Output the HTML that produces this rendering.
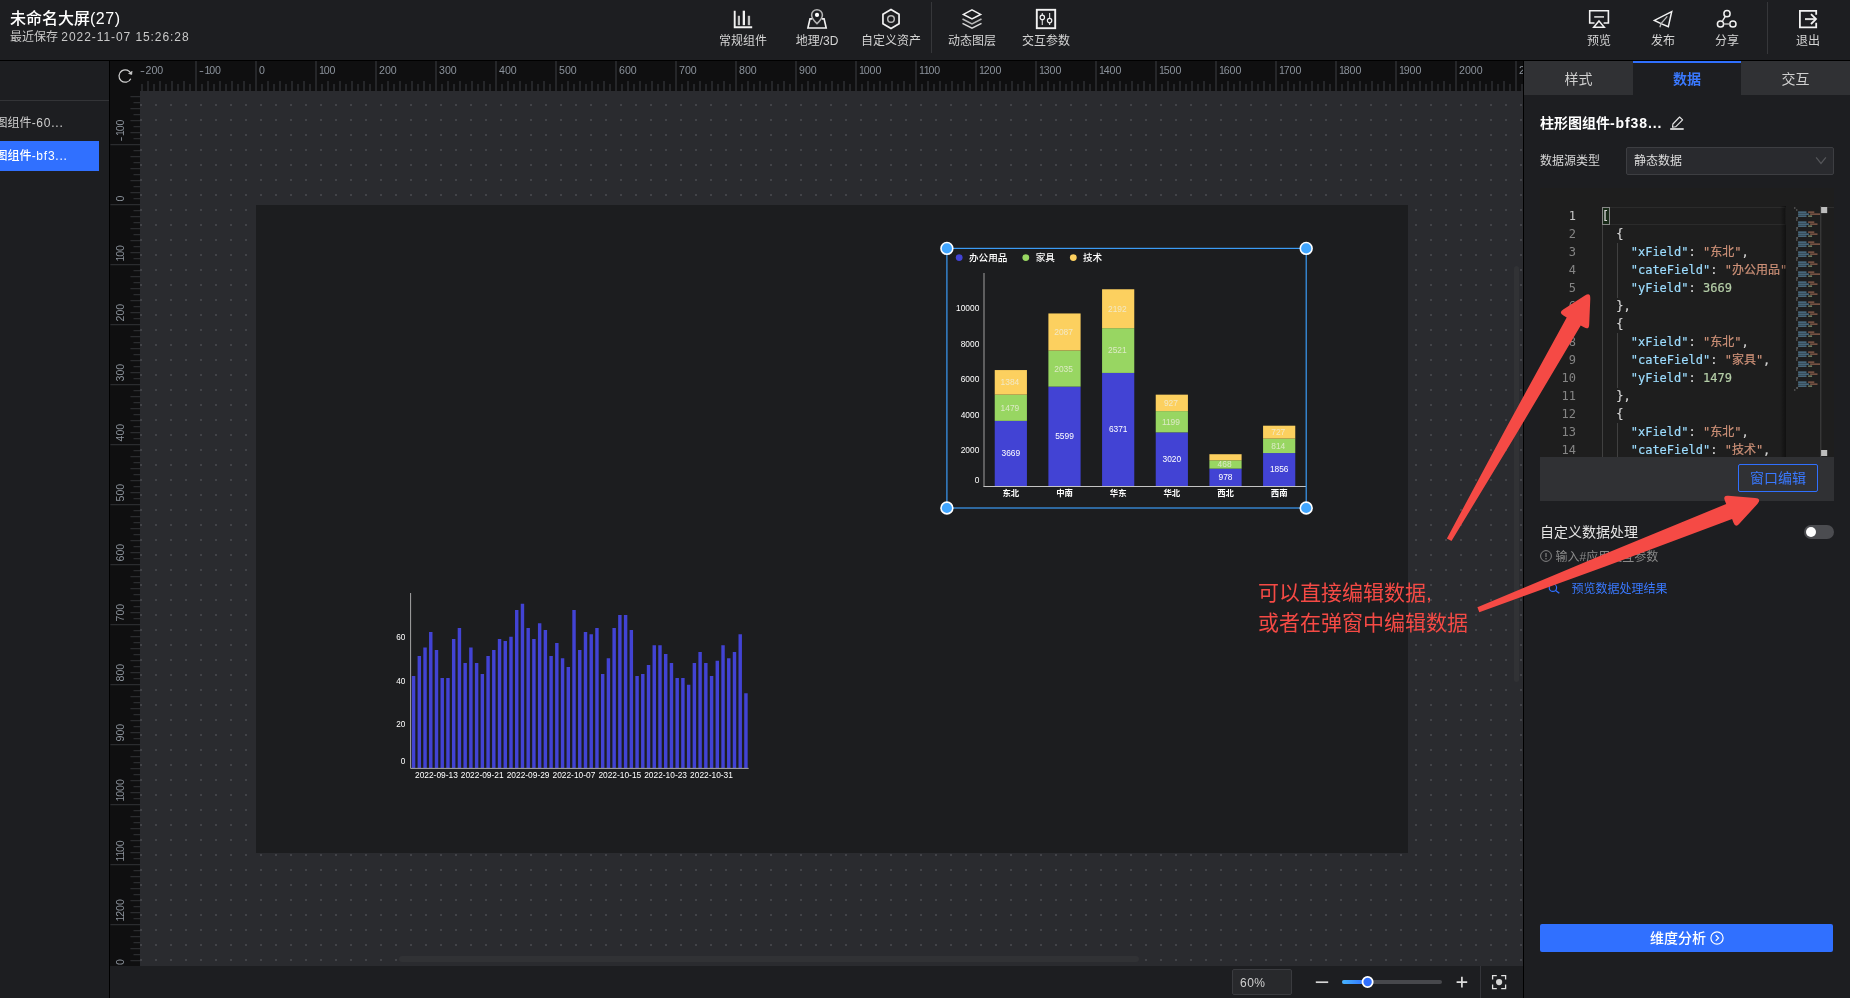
<!DOCTYPE html><html lang="zh-CN"><head><meta charset="utf-8"><title>未命名大屏(27)</title><style>

*{box-sizing:border-box}
html,body{margin:0;padding:0}
body{width:1850px;height:998px;overflow:hidden;background:#1d1e21;font-family:"Liberation Sans","Noto Sans CJK SC",sans-serif;color:#ddd;position:relative;font-size:12px}
.abs{position:absolute}
.hdr{left:0;top:0;width:1850px;height:61px;background:#1d1e21;border-bottom:1px solid #000}
.title{left:10px;top:8px;font-size:16px;line-height:21px;color:#fff;font-weight:500;white-space:nowrap}
.sub{left:10px;top:29px;font-size:12px;line-height:17px;color:#c9c9c9;white-space:nowrap}
.sub span{letter-spacing:.93px}
.nav{top:0;height:60px;text-align:center;color:#d4d4d4;font-size:12px;line-height:17px;white-space:nowrap}
.nav svg{position:absolute;left:50%;top:0;overflow:visible}
.nav .t{position:absolute;left:-20px;right:-20px;top:33px;text-align:center}
.vdiv{width:1px;background:#36373a}
.left{left:0;top:61px;width:110px;height:937px;background:#1d1e21;border-right:1px solid #000;overflow:hidden}
.li{position:absolute;left:0;width:99px;height:30px;line-height:30px;font-size:12px;color:#d0d0d0;white-space:nowrap;overflow:hidden}
.li span{position:absolute;left:-4.4px;top:0}
.li i{font-style:normal;letter-spacing:.75px}
.work{left:140px;top:91px;width:1383px;height:875px;background-color:#2a2b2f;
 background-image:radial-gradient(circle at 1px 1px,#424348 0,#424348 .95px,transparent 1.25px);background-size:15px 15px;background-position:0px -2px;overflow:hidden}
.canvas{left:256px;top:205px;width:1152px;height:648px;background:#1c1d1f}
.bbar{left:110px;top:966px;width:1413px;height:32px;background:#1d1e21}
.right{left:1523px;top:61px;width:327px;height:937px;background:#1d1e21;border-left:1px solid #000}
.tab{position:absolute;top:61px;height:34px;line-height:36px;text-align:center;font-size:14px;color:#cfcfcf;background:#303134}
.tab.on{background:#1d1e21;color:#3a79ff;font-weight:700;border-top:2px solid #3070ff;line-height:32px}

</style></head><body><div id="root" style="position:absolute;left:0;top:0;width:1850px;height:998px;will-change:transform">
<div class="abs hdr"></div>
<div class="abs title">未命名大屏<span style="letter-spacing:.5px">(27)</span></div>
<div class="abs sub">最近保存 <span>2022-11-07 15:26:28</span></div>
<div class="abs nav" style="left:706.0px;width:74px"><svg width="1" height="1"><g transform="translate(-743,0)">
<path d="M734.7 10.7V27.2H752.2" stroke="#f2f2f2" fill="none" stroke-width="1.9"/>
<rect x="737.8" y="15.8" width="2.2" height="9.4" fill="#c4c4c4"/><rect x="742.7" y="10.7" width="2.3" height="14.5" fill="#f2f2f2"/><rect x="747.8" y="15.8" width="2.3" height="9.4" fill="#c4c4c4"/></g></svg><div class="t">常规组件</div></div>
<div class="abs nav" style="left:780.0px;width:74px"><svg width="1" height="1"><g transform="translate(-817,0)">
<path d="M812.3 18.9H810L807.9 28H826.2L824.1 18.9H821.8" stroke="#f2f2f2" fill="none" stroke-width="1.6" stroke-linejoin="miter"/>
<path d="M817 23.6C813.6 20.6 811.6 17.9 811.6 15.1a5.4 5.4 0 0 1 10.8 0C822.4 17.9 820.4 20.6 817 23.6Z" stroke="#b4b4b4" fill="none" stroke-width="1.55"/>
<circle cx="817" cy="14.9" r="2.1" fill="#fff"/></g></svg><div class="t">地理/3D</div></div>
<div class="abs nav" style="left:854.0px;width:74px"><svg width="1" height="1"><g transform="translate(-891,0)">
<polygon points="891.00,9.40 899.05,14.20 899.05,23.80 891.00,28.60 882.95,23.80 882.95,14.20" stroke="#f2f2f2" fill="none" stroke-width="1.7"/><circle cx="891" cy="19" r="3.3" stroke="#b9b9b9" fill="none" stroke-width="1.5"/></g></svg><div class="t">自定义资产</div></div>
<div class="abs vdiv" style="left:931px;top:2px;height:51px"></div>
<div class="abs nav" style="left:935.0px;width:74px"><svg width="1" height="1"><g transform="translate(-972,0)">
<path d="M972 9.9L980.6 14.4L972 18.9L963.4 14.4Z" stroke="#f2f2f2" fill="none" stroke-width="1.5" stroke-linejoin="miter"/>
<path d="M962.5 19L972 23.8L981.5 19" stroke="#b9b9b9" fill="none" stroke-width="1.5"/>
<path d="M962.5 23.4L972 28.2L981.5 23.4" stroke="#d8d8d8" fill="none" stroke-width="1.5"/></g></svg><div class="t">动态图层</div></div>
<div class="abs nav" style="left:1009.0px;width:74px"><svg width="1" height="1"><g transform="translate(-1046,0)">
<rect x="1036.8" y="9.8" width="18.4" height="18.4" stroke="#f2f2f2" fill="none" stroke-width="1.9"/>
<path d="M1042.3 13.1V24.9M1049.6 13.1V24.9" stroke="#d0d0d0" stroke-width="1.2"/>
<circle cx="1042.3" cy="17.4" r="2.2" fill="#1d1e21" stroke="#f2f2f2" stroke-width="1.2"/><circle cx="1049.6" cy="20.6" r="2.2" fill="#1d1e21" stroke="#f2f2f2" stroke-width="1.2"/></g></svg><div class="t">交互参数</div></div>
<div class="abs nav" style="left:1567.0px;width:64px"><svg width="1" height="1"><g transform="translate(-1599,0)">
<path d="M1594.5 23H1589.7V10.8H1608.4V23H1603.6" stroke="#f2f2f2" fill="none" stroke-width="1.6"/>
<path d="M1599 21L1604.3 27.3H1593.7Z" stroke="#f2f2f2" fill="none" stroke-width="1.5" stroke-linejoin="miter"/>
<path d="M1594.2 16.9H1604" stroke="#c6c6c6" stroke-width="1.8"/></g></svg><div class="t">预览</div></div>
<div class="abs nav" style="left:1631.0px;width:64px"><svg width="1" height="1"><g transform="translate(-1663,0)">
<path d="M1671.7 11.7L1654.4 20.4L1661 23.6L1668.3 26.8L1671.7 11.7Z" stroke="#f2f2f2" fill="none" stroke-width="1.5" stroke-linejoin="miter"/>
<path d="M1667.3 16.4L1661 23.6L1659.9 27.2" stroke="#b9b9b9" fill="none" stroke-width="1.3"/></g></svg><div class="t">发布</div></div>
<div class="abs nav" style="left:1695.0px;width:64px"><svg width="1" height="1"><g transform="translate(-1727,0)">
<circle cx="1727" cy="13.7" r="3.1" stroke="#f2f2f2" fill="none" stroke-width="1.5"/><circle cx="1720.5" cy="24" r="3.1" stroke="#f2f2f2" fill="none" stroke-width="1.5"/><circle cx="1732.9" cy="24" r="3.1" stroke="#f2f2f2" fill="none" stroke-width="1.5"/>
<path d="M1725.2 16.7L1722.5 20.9" stroke="#f2f2f2" fill="none" stroke-width="1.4"/><path d="M1723.8 24H1729.6" stroke="#b9b9b9" fill="none" stroke-width="1.6"/></g></svg><div class="t">分享</div></div>
<div class="abs vdiv" style="left:1767px;top:2px;height:52px"></div>
<div class="abs nav" style="left:1776.0px;width:64px"><svg width="1" height="1"><g transform="translate(-1808,0)">
<path d="M1816.2 14.8V10.9H1799.9V27.3H1816.2V22.8" stroke="#f2f2f2" fill="none" stroke-width="1.8" stroke-linejoin="miter"/>
<path d="M1805 19.1H1815.5" stroke="#dcdcdc" stroke-width="2"/><path d="M1811 14.2L1816 19.1L1811 24" stroke="#f2f2f2" fill="none" stroke-width="1.8"/></g></svg><div class="t">退出</div></div>
<div class="abs left"><div class="abs" style="left:0;top:39px;width:109px;height:1px;background:#333437"></div>
<div class="li" style="top:47px"><span>图组件<i>-60...</i></span></div>
<div class="li" style="top:80px;background:#3070ff;color:#fff;font-weight:500"><span>图组件<i>-bf3...</i></span></div>
</div>
<div class="abs work"></div>
<div class="abs canvas"></div>
<div class="abs" style="left:1513.5px;top:266px;width:5.5px;height:416px;border-radius:3px;background:#313235"></div>
<div class="abs" style="left:399px;top:956px;width:740px;height:6px;border-radius:3px;background:#313235"></div>
<svg class="abs" style="left:110px;top:61px" width="1413" height="905" font-family='"Liberation Sans","Noto Sans CJK SC",sans-serif' font-size="10.6" fill="#8b929b"><rect x="0" y="0" width="1413" height="30" fill="#0f0f10"/><rect x="0" y="0" width="30" height="905" fill="#0f0f10"/><path d="M31 23h2v7h-2zM37 20h2v10h-2zM43 23h2v7h-2zM49 20h2v10h-2zM55 23h2v7h-2zM61 20h2v10h-2zM67 23h2v7h-2zM73 20h2v10h-2zM79 23h2v7h-2zM85 0h2v30h-2zM91 23h2v7h-2zM97 20h2v10h-2zM103 23h2v7h-2zM109 20h2v10h-2zM115 23h2v7h-2zM121 20h2v10h-2zM127 23h2v7h-2zM133 20h2v10h-2zM139 23h2v7h-2zM145 0h2v30h-2zM151 23h2v7h-2zM157 20h2v10h-2zM163 23h2v7h-2zM169 20h2v10h-2zM175 23h2v7h-2zM181 20h2v10h-2zM187 23h2v7h-2zM193 20h2v10h-2zM199 23h2v7h-2zM205 0h2v30h-2zM211 23h2v7h-2zM217 20h2v10h-2zM223 23h2v7h-2zM229 20h2v10h-2zM235 23h2v7h-2zM241 20h2v10h-2zM247 23h2v7h-2zM253 20h2v10h-2zM259 23h2v7h-2zM265 0h2v30h-2zM271 23h2v7h-2zM277 20h2v10h-2zM283 23h2v7h-2zM289 20h2v10h-2zM295 23h2v7h-2zM301 20h2v10h-2zM307 23h2v7h-2zM313 20h2v10h-2zM319 23h2v7h-2zM325 0h2v30h-2zM331 23h2v7h-2zM337 20h2v10h-2zM343 23h2v7h-2zM349 20h2v10h-2zM355 23h2v7h-2zM361 20h2v10h-2zM367 23h2v7h-2zM373 20h2v10h-2zM379 23h2v7h-2zM385 0h2v30h-2zM391 23h2v7h-2zM397 20h2v10h-2zM403 23h2v7h-2zM409 20h2v10h-2zM415 23h2v7h-2zM421 20h2v10h-2zM427 23h2v7h-2zM433 20h2v10h-2zM439 23h2v7h-2zM445 0h2v30h-2zM451 23h2v7h-2zM457 20h2v10h-2zM463 23h2v7h-2zM469 20h2v10h-2zM475 23h2v7h-2zM481 20h2v10h-2zM487 23h2v7h-2zM493 20h2v10h-2zM499 23h2v7h-2zM505 0h2v30h-2zM511 23h2v7h-2zM517 20h2v10h-2zM523 23h2v7h-2zM529 20h2v10h-2zM535 23h2v7h-2zM541 20h2v10h-2zM547 23h2v7h-2zM553 20h2v10h-2zM559 23h2v7h-2zM565 0h2v30h-2zM571 23h2v7h-2zM577 20h2v10h-2zM583 23h2v7h-2zM589 20h2v10h-2zM595 23h2v7h-2zM601 20h2v10h-2zM607 23h2v7h-2zM613 20h2v10h-2zM619 23h2v7h-2zM625 0h2v30h-2zM631 23h2v7h-2zM637 20h2v10h-2zM643 23h2v7h-2zM649 20h2v10h-2zM655 23h2v7h-2zM661 20h2v10h-2zM667 23h2v7h-2zM673 20h2v10h-2zM679 23h2v7h-2zM685 0h2v30h-2zM691 23h2v7h-2zM697 20h2v10h-2zM703 23h2v7h-2zM709 20h2v10h-2zM715 23h2v7h-2zM721 20h2v10h-2zM727 23h2v7h-2zM733 20h2v10h-2zM739 23h2v7h-2zM745 0h2v30h-2zM751 23h2v7h-2zM757 20h2v10h-2zM763 23h2v7h-2zM769 20h2v10h-2zM775 23h2v7h-2zM781 20h2v10h-2zM787 23h2v7h-2zM793 20h2v10h-2zM799 23h2v7h-2zM805 0h2v30h-2zM811 23h2v7h-2zM817 20h2v10h-2zM823 23h2v7h-2zM829 20h2v10h-2zM835 23h2v7h-2zM841 20h2v10h-2zM847 23h2v7h-2zM853 20h2v10h-2zM859 23h2v7h-2zM865 0h2v30h-2zM871 23h2v7h-2zM877 20h2v10h-2zM883 23h2v7h-2zM889 20h2v10h-2zM895 23h2v7h-2zM901 20h2v10h-2zM907 23h2v7h-2zM913 20h2v10h-2zM919 23h2v7h-2zM925 0h2v30h-2zM931 23h2v7h-2zM937 20h2v10h-2zM943 23h2v7h-2zM949 20h2v10h-2zM955 23h2v7h-2zM961 20h2v10h-2zM967 23h2v7h-2zM973 20h2v10h-2zM979 23h2v7h-2zM985 0h2v30h-2zM991 23h2v7h-2zM997 20h2v10h-2zM1003 23h2v7h-2zM1009 20h2v10h-2zM1015 23h2v7h-2zM1021 20h2v10h-2zM1027 23h2v7h-2zM1033 20h2v10h-2zM1039 23h2v7h-2zM1045 0h2v30h-2zM1051 23h2v7h-2zM1057 20h2v10h-2zM1063 23h2v7h-2zM1069 20h2v10h-2zM1075 23h2v7h-2zM1081 20h2v10h-2zM1087 23h2v7h-2zM1093 20h2v10h-2zM1099 23h2v7h-2zM1105 0h2v30h-2zM1111 23h2v7h-2zM1117 20h2v10h-2zM1123 23h2v7h-2zM1129 20h2v10h-2zM1135 23h2v7h-2zM1141 20h2v10h-2zM1147 23h2v7h-2zM1153 20h2v10h-2zM1159 23h2v7h-2zM1165 0h2v30h-2zM1171 23h2v7h-2zM1177 20h2v10h-2zM1183 23h2v7h-2zM1189 20h2v10h-2zM1195 23h2v7h-2zM1201 20h2v10h-2zM1207 23h2v7h-2zM1213 20h2v10h-2zM1219 23h2v7h-2zM1225 0h2v30h-2zM1231 23h2v7h-2zM1237 20h2v10h-2zM1243 23h2v7h-2zM1249 20h2v10h-2zM1255 23h2v7h-2zM1261 20h2v10h-2zM1267 23h2v7h-2zM1273 20h2v10h-2zM1279 23h2v7h-2zM1285 0h2v30h-2zM1291 23h2v7h-2zM1297 20h2v10h-2zM1303 23h2v7h-2zM1309 20h2v10h-2zM1315 23h2v7h-2zM1321 20h2v10h-2zM1327 23h2v7h-2zM1333 20h2v10h-2zM1339 23h2v7h-2zM1345 0h2v30h-2zM1351 23h2v7h-2zM1357 20h2v10h-2zM1363 23h2v7h-2zM1369 20h2v10h-2zM1375 23h2v7h-2zM1381 20h2v10h-2zM1387 23h2v7h-2zM1393 20h2v10h-2zM1399 23h2v7h-2zM1405 0h2v30h-2zM1411 23h2v7h-2z" fill="#252629"/><path d="M20.4 35h9.6v1.2h-9.6zM23.5 41h6.5v1.2h-6.5zM20.4 47h9.6v1.2h-9.6zM23.5 53h6.5v1.2h-6.5zM20.4 59h9.6v1.2h-9.6zM23.5 65h6.5v1.2h-6.5zM20.4 71h9.6v1.2h-9.6zM23.5 77h6.5v1.2h-6.5zM0.4 83h29.6v1.2h-29.6zM23.5 89h6.5v1.2h-6.5zM20.4 95h9.6v1.2h-9.6zM23.5 101h6.5v1.2h-6.5zM20.4 107h9.6v1.2h-9.6zM23.5 113h6.5v1.2h-6.5zM20.4 119h9.6v1.2h-9.6zM23.5 125h6.5v1.2h-6.5zM20.4 131h9.6v1.2h-9.6zM23.5 137h6.5v1.2h-6.5zM0.4 143h29.6v1.2h-29.6zM23.5 149h6.5v1.2h-6.5zM20.4 155h9.6v1.2h-9.6zM23.5 161h6.5v1.2h-6.5zM20.4 167h9.6v1.2h-9.6zM23.5 173h6.5v1.2h-6.5zM20.4 179h9.6v1.2h-9.6zM23.5 185h6.5v1.2h-6.5zM20.4 191h9.6v1.2h-9.6zM23.5 197h6.5v1.2h-6.5zM0.4 203h29.6v1.2h-29.6zM23.5 209h6.5v1.2h-6.5zM20.4 215h9.6v1.2h-9.6zM23.5 221h6.5v1.2h-6.5zM20.4 227h9.6v1.2h-9.6zM23.5 233h6.5v1.2h-6.5zM20.4 239h9.6v1.2h-9.6zM23.5 245h6.5v1.2h-6.5zM20.4 251h9.6v1.2h-9.6zM23.5 257h6.5v1.2h-6.5zM0.4 263h29.6v1.2h-29.6zM23.5 269h6.5v1.2h-6.5zM20.4 275h9.6v1.2h-9.6zM23.5 281h6.5v1.2h-6.5zM20.4 287h9.6v1.2h-9.6zM23.5 293h6.5v1.2h-6.5zM20.4 299h9.6v1.2h-9.6zM23.5 305h6.5v1.2h-6.5zM20.4 311h9.6v1.2h-9.6zM23.5 317h6.5v1.2h-6.5zM0.4 323h29.6v1.2h-29.6zM23.5 329h6.5v1.2h-6.5zM20.4 335h9.6v1.2h-9.6zM23.5 341h6.5v1.2h-6.5zM20.4 347h9.6v1.2h-9.6zM23.5 353h6.5v1.2h-6.5zM20.4 359h9.6v1.2h-9.6zM23.5 365h6.5v1.2h-6.5zM20.4 371h9.6v1.2h-9.6zM23.5 377h6.5v1.2h-6.5zM0.4 383h29.6v1.2h-29.6zM23.5 389h6.5v1.2h-6.5zM20.4 395h9.6v1.2h-9.6zM23.5 401h6.5v1.2h-6.5zM20.4 407h9.6v1.2h-9.6zM23.5 413h6.5v1.2h-6.5zM20.4 419h9.6v1.2h-9.6zM23.5 425h6.5v1.2h-6.5zM20.4 431h9.6v1.2h-9.6zM23.5 437h6.5v1.2h-6.5zM0.4 443h29.6v1.2h-29.6zM23.5 449h6.5v1.2h-6.5zM20.4 455h9.6v1.2h-9.6zM23.5 461h6.5v1.2h-6.5zM20.4 467h9.6v1.2h-9.6zM23.5 473h6.5v1.2h-6.5zM20.4 479h9.6v1.2h-9.6zM23.5 485h6.5v1.2h-6.5zM20.4 491h9.6v1.2h-9.6zM23.5 497h6.5v1.2h-6.5zM0.4 503h29.6v1.2h-29.6zM23.5 509h6.5v1.2h-6.5zM20.4 515h9.6v1.2h-9.6zM23.5 521h6.5v1.2h-6.5zM20.4 527h9.6v1.2h-9.6zM23.5 533h6.5v1.2h-6.5zM20.4 539h9.6v1.2h-9.6zM23.5 545h6.5v1.2h-6.5zM20.4 551h9.6v1.2h-9.6zM23.5 557h6.5v1.2h-6.5zM0.4 563h29.6v1.2h-29.6zM23.5 569h6.5v1.2h-6.5zM20.4 575h9.6v1.2h-9.6zM23.5 581h6.5v1.2h-6.5zM20.4 587h9.6v1.2h-9.6zM23.5 593h6.5v1.2h-6.5zM20.4 599h9.6v1.2h-9.6zM23.5 605h6.5v1.2h-6.5zM20.4 611h9.6v1.2h-9.6zM23.5 617h6.5v1.2h-6.5zM0.4 623h29.6v1.2h-29.6zM23.5 629h6.5v1.2h-6.5zM20.4 635h9.6v1.2h-9.6zM23.5 641h6.5v1.2h-6.5zM20.4 647h9.6v1.2h-9.6zM23.5 653h6.5v1.2h-6.5zM20.4 659h9.6v1.2h-9.6zM23.5 665h6.5v1.2h-6.5zM20.4 671h9.6v1.2h-9.6zM23.5 677h6.5v1.2h-6.5zM0.4 683h29.6v1.2h-29.6zM23.5 689h6.5v1.2h-6.5zM20.4 695h9.6v1.2h-9.6zM23.5 701h6.5v1.2h-6.5zM20.4 707h9.6v1.2h-9.6zM23.5 713h6.5v1.2h-6.5zM20.4 719h9.6v1.2h-9.6zM23.5 725h6.5v1.2h-6.5zM20.4 731h9.6v1.2h-9.6zM23.5 737h6.5v1.2h-6.5zM0.4 743h29.6v1.2h-29.6zM23.5 749h6.5v1.2h-6.5zM20.4 755h9.6v1.2h-9.6zM23.5 761h6.5v1.2h-6.5zM20.4 767h9.6v1.2h-9.6zM23.5 773h6.5v1.2h-6.5zM20.4 779h9.6v1.2h-9.6zM23.5 785h6.5v1.2h-6.5zM20.4 791h9.6v1.2h-9.6zM23.5 797h6.5v1.2h-6.5zM0.4 803h29.6v1.2h-29.6zM23.5 809h6.5v1.2h-6.5zM20.4 815h9.6v1.2h-9.6zM23.5 821h6.5v1.2h-6.5zM20.4 827h9.6v1.2h-9.6zM23.5 833h6.5v1.2h-6.5zM20.4 839h9.6v1.2h-9.6zM23.5 845h6.5v1.2h-6.5zM20.4 851h9.6v1.2h-9.6zM23.5 857h6.5v1.2h-6.5zM0.4 863h29.6v1.2h-29.6zM23.5 869h6.5v1.2h-6.5zM20.4 875h9.6v1.2h-9.6zM23.5 881h6.5v1.2h-6.5zM20.4 887h9.6v1.2h-9.6zM23.5 893h6.5v1.2h-6.5zM20.4 899h9.6v1.2h-9.6zM23.5 905h6.5v1.2h-6.5zM20.4 911h9.6v1.2h-9.6zM23.5 917h6.5v1.2h-6.5z" fill="#2b2c2f"/><text y="13.4"><tspan x="30.0" textLength="4.9" lengthAdjust="spacingAndGlyphs">-</tspan><tspan x="35.5 41.4 47.3">200</tspan></text><text y="13.4"><tspan x="89.0" textLength="4.9" lengthAdjust="spacingAndGlyphs">-</tspan><tspan x="94.5 99.2 105.1">100</tspan></text><text y="13.4"><tspan x="149.0">0</tspan></text><text y="13.4"><tspan x="209.0 213.7 219.6">100</tspan></text><text y="13.4"><tspan x="269.0 274.9 280.8">200</tspan></text><text y="13.4"><tspan x="329.0 334.9 340.8">300</tspan></text><text y="13.4"><tspan x="389.0 394.9 400.8">400</tspan></text><text y="13.4"><tspan x="449.0 454.9 460.8">500</tspan></text><text y="13.4"><tspan x="509.0 514.9 520.8">600</tspan></text><text y="13.4"><tspan x="569.0 574.9 580.8">700</tspan></text><text y="13.4"><tspan x="629.0 634.9 640.8">800</tspan></text><text y="13.4"><tspan x="689.0 694.9 700.8">900</tspan></text><text y="13.4"><tspan x="749.0 753.7 759.6 765.5">1000</tspan></text><text y="13.4"><tspan x="809.0 813.7 818.4 824.3">1100</tspan></text><text y="13.4"><tspan x="869.0 873.7 879.6 885.5">1200</tspan></text><text y="13.4"><tspan x="929.0 933.7 939.6 945.5">1300</tspan></text><text y="13.4"><tspan x="989.0 993.7 999.6 1005.5">1400</tspan></text><text y="13.4"><tspan x="1049.0 1053.7 1059.6 1065.5">1500</tspan></text><text y="13.4"><tspan x="1109.0 1113.7 1119.6 1125.5">1600</tspan></text><text y="13.4"><tspan x="1169.0 1173.7 1179.6 1185.5">1700</tspan></text><text y="13.4"><tspan x="1229.0 1233.7 1239.6 1245.5">1800</tspan></text><text y="13.4"><tspan x="1289.0 1293.7 1299.6 1305.5">1900</tspan></text><text y="13.4"><tspan x="1349.0 1354.9 1360.8 1366.7">2000</tspan></text><text y="13.4"><tspan x="1409.0 1414.9 1419.6 1425.5">2100</tspan></text><text transform="translate(14.2,80.5) rotate(-90)"><tspan x="0.0" textLength="4.9" lengthAdjust="spacingAndGlyphs">-</tspan><tspan x="5.5 10.2 16.1">100</tspan></text><text transform="translate(14.2,140.5) rotate(-90)"><tspan x="0.0">0</tspan></text><text transform="translate(14.2,200.5) rotate(-90)"><tspan x="0.0 4.7 10.6">100</tspan></text><text transform="translate(14.2,260.5) rotate(-90)"><tspan x="0.0 5.9 11.8">200</tspan></text><text transform="translate(14.2,320.5) rotate(-90)"><tspan x="0.0 5.9 11.8">300</tspan></text><text transform="translate(14.2,380.5) rotate(-90)"><tspan x="0.0 5.9 11.8">400</tspan></text><text transform="translate(14.2,440.5) rotate(-90)"><tspan x="0.0 5.9 11.8">500</tspan></text><text transform="translate(14.2,500.5) rotate(-90)"><tspan x="0.0 5.9 11.8">600</tspan></text><text transform="translate(14.2,560.5) rotate(-90)"><tspan x="0.0 5.9 11.8">700</tspan></text><text transform="translate(14.2,620.5) rotate(-90)"><tspan x="0.0 5.9 11.8">800</tspan></text><text transform="translate(14.2,680.5) rotate(-90)"><tspan x="0.0 5.9 11.8">900</tspan></text><text transform="translate(14.2,740.5) rotate(-90)"><tspan x="0.0 4.7 10.6 16.5">1000</tspan></text><text transform="translate(14.2,800.5) rotate(-90)"><tspan x="0.0 4.7 9.4 15.3">1100</tspan></text><text transform="translate(14.2,860.5) rotate(-90)"><tspan x="0.0 4.7 10.6 16.5">1200</tspan></text><text transform="translate(14.2,920.5) rotate(-90)" x="0 4.2 9.6 16.4">1300</text><rect x="0" y="0" width="30" height="30" fill="#0f0f10"/><g transform="translate(15.2,15)" stroke="#cfcfcf" fill="none" stroke-width="1.25"><path d="M5.9 -1.9A6.2 6.2 0 1 0 5.6 2.7"/><path d="M3.2 -2.6L6.5 -1.5L6.9 -5" stroke-linejoin="miter" fill="#cfcfcf" stroke-width=".6"/></g></svg>
<svg class="abs" style="left:0;top:0" width="1850" height="998" font-family='"Liberation Sans","Noto Sans CJK SC",sans-serif'><path d="M411.86 676.05h3.44V768.0h-3.44zM417.59 656.05h3.44V768.0h-3.44zM423.32 647.48h3.44V768.0h-3.44zM429.05 632.05h3.44V768.0h-3.44zM434.78 649.95h3.44V768.0h-3.44zM440.51 677.95h3.44V768.0h-3.44zM446.24 677.95h3.44V768.0h-3.44zM451.97 638.90h3.44V768.0h-3.44zM457.70 628.05h3.44V768.0h-3.44zM463.44 662.90h3.44V768.0h-3.44zM469.17 647.48h3.44V768.0h-3.44zM474.90 662.90h3.44V768.0h-3.44zM480.63 673.95h3.44V768.0h-3.44zM486.36 656.05h3.44V768.0h-3.44zM492.09 649.95h3.44V768.0h-3.44zM497.82 638.90h3.44V768.0h-3.44zM503.55 641.00h3.44V768.0h-3.44zM509.28 636.81h3.44V768.0h-3.44zM515.01 609.95h3.44V768.0h-3.44zM520.74 603.86h3.44V768.0h-3.44zM526.47 628.05h3.44V768.0h-3.44zM532.20 638.90h3.44V768.0h-3.44zM537.93 623.29h3.44V768.0h-3.44zM543.66 629.95h3.44V768.0h-3.44zM549.39 656.05h3.44V768.0h-3.44zM555.12 643.10h3.44V768.0h-3.44zM560.85 658.33h3.44V768.0h-3.44zM566.58 667.10h3.44V768.0h-3.44zM572.31 609.95h3.44V768.0h-3.44zM578.05 649.95h3.44V768.0h-3.44zM583.78 632.05h3.44V768.0h-3.44zM589.51 634.33h3.44V768.0h-3.44zM595.24 628.05h3.44V768.0h-3.44zM600.97 673.95h3.44V768.0h-3.44zM606.70 658.33h3.44V768.0h-3.44zM612.43 628.05h3.44V768.0h-3.44zM618.16 614.90h3.44V768.0h-3.44zM623.89 614.90h3.44V768.0h-3.44zM629.62 629.95h3.44V768.0h-3.44zM635.35 676.05h3.44V768.0h-3.44zM641.08 673.95h3.44V768.0h-3.44zM646.81 665.00h3.44V768.0h-3.44zM652.54 645.19h3.44V768.0h-3.44zM658.27 645.19h3.44V768.0h-3.44zM664.00 653.95h3.44V768.0h-3.44zM669.73 662.90h3.44V768.0h-3.44zM675.46 677.95h3.44V768.0h-3.44zM681.19 677.95h3.44V768.0h-3.44zM686.93 684.81h3.44V768.0h-3.44zM692.66 662.90h3.44V768.0h-3.44zM698.39 652.05h3.44V768.0h-3.44zM704.12 662.90h3.44V768.0h-3.44zM709.85 676.05h3.44V768.0h-3.44zM715.58 660.81h3.44V768.0h-3.44zM721.31 645.19h3.44V768.0h-3.44zM727.04 658.33h3.44V768.0h-3.44zM732.77 652.05h3.44V768.0h-3.44zM738.50 634.33h3.44V768.0h-3.44zM744.23 693.19h3.44V768.0h-3.44z" fill="#4243d4"/><path d="M410.6 593V768.4H748.7" stroke="#b5b5b5" stroke-width="0.9" fill="none"/><g font-size="8.2" fill="#fff" text-anchor="end"><text x="405.4" y="639.9">60</text><text x="405.4" y="683.9">40</text><text x="405.4" y="726.5">20</text><text x="405.4" y="764.3">0</text></g><g font-size="8.4" fill="#fff" text-anchor="middle"><text x="436.4" y="778">2022-09-13</text><text x="482.2" y="778">2022-09-21</text><text x="528.1" y="778">2022-09-29</text><text x="573.9" y="778">2022-10-07</text><text x="619.8" y="778">2022-10-15</text><text x="665.6" y="778">2022-10-23</text><text x="711.5" y="778">2022-10-31</text></g><rect x="994.73" y="420.88" width="32.20" height="65.12" fill="#4243d4"/><rect x="994.73" y="394.62" width="32.20" height="26.25" fill="#98d662"/><rect x="994.73" y="370.06" width="32.20" height="24.57" fill="#fcd05f"/><text x="1010.8" y="456.3" font-size="8.4" fill="#fff" fill-opacity="1" text-anchor="middle">3669</text><text x="1009.9" y="410.6" font-size="8.4" fill="#f0efe2" fill-opacity=".78" text-anchor="middle">1479</text><text x="1009.9" y="385.2" font-size="8.4" fill="#f0efe2" fill-opacity=".78" text-anchor="middle">1384</text><text x="1010.8" y="496.4" font-size="8.4" font-weight="700" fill="#fff" text-anchor="middle">东北</text><rect x="1048.40" y="386.62" width="32.20" height="99.38" fill="#4243d4"/><rect x="1048.40" y="350.50" width="32.20" height="36.12" fill="#98d662"/><rect x="1048.40" y="313.45" width="32.20" height="37.04" fill="#fcd05f"/><text x="1064.5" y="439.2" font-size="8.4" fill="#fff" fill-opacity="1" text-anchor="middle">5599</text><text x="1063.6" y="371.5" font-size="8.4" fill="#f0efe2" fill-opacity=".78" text-anchor="middle">2035</text><text x="1063.6" y="334.9" font-size="8.4" fill="#f0efe2" fill-opacity=".78" text-anchor="middle">2087</text><text x="1064.5" y="496.4" font-size="8.4" font-weight="700" fill="#fff" text-anchor="middle">中南</text><rect x="1102.07" y="372.91" width="32.20" height="113.09" fill="#4243d4"/><rect x="1102.07" y="328.17" width="32.20" height="44.75" fill="#98d662"/><rect x="1102.07" y="289.26" width="32.20" height="38.91" fill="#fcd05f"/><text x="1118.2" y="432.4" font-size="8.4" fill="#fff" fill-opacity="1" text-anchor="middle">6371</text><text x="1117.3" y="353.4" font-size="8.4" fill="#f0efe2" fill-opacity=".78" text-anchor="middle">2521</text><text x="1117.3" y="311.6" font-size="8.4" fill="#f0efe2" fill-opacity=".78" text-anchor="middle">2192</text><text x="1118.2" y="496.4" font-size="8.4" font-weight="700" fill="#fff" text-anchor="middle">华东</text><rect x="1155.73" y="432.39" width="32.20" height="53.61" fill="#4243d4"/><rect x="1155.73" y="411.11" width="32.20" height="21.28" fill="#98d662"/><rect x="1155.73" y="394.66" width="32.20" height="16.45" fill="#fcd05f"/><text x="1171.8" y="462.1" font-size="8.4" fill="#fff" fill-opacity="1" text-anchor="middle">3020</text><text x="1170.9" y="424.7" font-size="8.4" fill="#f0efe2" fill-opacity=".78" text-anchor="middle">1199</text><text x="1170.9" y="405.8" font-size="8.4" fill="#f0efe2" fill-opacity=".78" text-anchor="middle">927</text><text x="1171.8" y="496.4" font-size="8.4" font-weight="700" fill="#fff" text-anchor="middle">华北</text><rect x="1209.40" y="468.64" width="32.20" height="17.36" fill="#4243d4"/><rect x="1209.40" y="460.33" width="32.20" height="8.31" fill="#98d662"/><rect x="1209.40" y="454.21" width="32.20" height="6.12" fill="#fcd05f"/><text x="1225.5" y="480.2" font-size="8.4" fill="#fff" fill-opacity="1" text-anchor="middle">978</text><text x="1224.6" y="467.4" font-size="8.4" fill="#f0efe2" fill-opacity=".78" text-anchor="middle">468</text><text x="1225.5" y="496.4" font-size="8.4" font-weight="700" fill="#fff" text-anchor="middle">西北</text><rect x="1263.07" y="453.06" width="32.20" height="32.94" fill="#4243d4"/><rect x="1263.07" y="438.61" width="32.20" height="14.45" fill="#98d662"/><rect x="1263.07" y="425.70" width="32.20" height="12.90" fill="#fcd05f"/><text x="1279.2" y="472.4" font-size="8.4" fill="#fff" fill-opacity="1" text-anchor="middle">1856</text><text x="1278.3" y="448.7" font-size="8.4" fill="#f0efe2" fill-opacity=".78" text-anchor="middle">814</text><text x="1278.3" y="435.1" font-size="8.4" fill="#f0efe2" fill-opacity=".78" text-anchor="middle">727</text><text x="1279.2" y="496.4" font-size="8.4" font-weight="700" fill="#fff" text-anchor="middle">西南</text><path d="M984.0 273V486.5" stroke="#8a8a8a" stroke-width="1.2" fill="none"/><path d="M983.4 486.5H1306" stroke="#c4c4c4" stroke-width="1.1" fill="none"/><g font-size="8.4" fill="#fff" text-anchor="end"><text x="979.3" y="311.1">10000</text><text x="979.3" y="347.2">8000</text><text x="979.3" y="382.4">6000</text><text x="979.3" y="417.9">4000</text><text x="979.3" y="453.0">2000</text><text x="979.3" y="483.0">0</text></g><circle cx="959.2" cy="257.6" r="3.4" fill="#4243d4"/><text x="969" y="260.8" font-size="9.6" font-weight="500" fill="#fff">办公用品</text><circle cx="1025.8" cy="257.6" r="3.4" fill="#98d662"/><text x="1035.7" y="260.8" font-size="9.6" font-weight="500" fill="#fff">家具</text><circle cx="1073.3" cy="257.6" r="3.4" fill="#fcd05f"/><text x="1082.9" y="260.8" font-size="9.6" font-weight="500" fill="#fff">技术</text><rect x="946.9" y="248.4" width="359.3" height="259.6" fill="none" stroke="#3b9bf5" stroke-width="1.2"/><circle cx="946.9" cy="248.4" r="5.9" fill="#41a6ff" stroke="#fff" stroke-width="1.6"/><circle cx="1306.2" cy="248.4" r="5.9" fill="#41a6ff" stroke="#fff" stroke-width="1.6"/><circle cx="946.9" cy="508" r="5.9" fill="#41a6ff" stroke="#fff" stroke-width="1.6"/><circle cx="1306.2" cy="508" r="5.9" fill="#41a6ff" stroke="#fff" stroke-width="1.6"/></svg>
<div class="abs" style="left:1258px;top:577.6px;font-size:21px;line-height:30.4px;color:#f54a45;white-space:nowrap;font-weight:400;font-family:'Liberation Sans','Noto Sans CJK SC',sans-serif">可以直接编辑数据,<br>或者在弹窗中编辑数据</div>
<div class="abs bbar"></div>
<div class="abs" style="left:1232px;top:969px;width:60px;height:26px;border:1px solid #3a3b3f;background:#28292c;border-radius:2px;color:#cfcfcf;font-size:12px;line-height:26px;padding-left:7px;letter-spacing:.5px">60%</div>
<svg class="abs" style="left:1300px;top:966px" width="223" height="32"><path d="M15.8 16.2H28.2" stroke="#d6d6d6" stroke-width="1.7"/><rect x="42" y="14" width="100" height="4" rx="2" fill="#47484c"/><defs><linearGradient id="sg" x1="0" x2="1" y1="0" y2="0"><stop offset="0" stop-color="#46b4ff"/><stop offset="1" stop-color="#2e6bff"/></linearGradient></defs><rect x="42" y="14" width="26" height="4" rx="2" fill="url(#sg)"/><circle cx="67.6" cy="16" r="5.1" fill="#3070ff" stroke="#fff" stroke-width="1.8"/><path d="M156.6 16.1H167.2M161.9 10.8V21.4" stroke="#dedede" stroke-width="1.7"/><rect x="180" y="0" width="1" height="32" fill="#34353a"/><path d="M192.6 13.6V9.6H196.8M201.2 9.6H205.6V13.6M205.6 18.6V22.6H201.2M196.8 22.6H192.6V18.6" stroke="#e2e2e2" stroke-width="1.3" fill="none"/><circle cx="199.1" cy="16.1" r="3.1" fill="#d4d4d4"/></svg>
<div class="abs right"></div>
<div class="tab" style="left:1524px;width:109px">样式</div>
<div class="tab on" style="left:1633px;width:108px">数据</div>
<div class="tab" style="left:1741px;width:109px">交互</div>
<div class="abs" style="left:1540px;top:112px;font-size:14px;line-height:22px;font-weight:700;color:#fff;white-space:nowrap">柱形图组件<span style="letter-spacing:.9px">-bf38...</span></div>
<svg class="abs" style="left:1668px;top:114px" width="18" height="18"><path d="M2.2 15H15.7" stroke="#efefef" stroke-width="1.6"/><path d="M11.6 3L14.6 5.9L7.6 12.8L4.5 13.2L4.9 10Z" stroke="#e4e4e4" stroke-width="1.15" fill="none" stroke-linejoin="round"/></svg>
<div class="abs" style="left:1540px;top:152px;font-size:12px;line-height:18px;color:#d6d6d6;white-space:nowrap">数据源类型</div>
<div class="abs" style="left:1626px;top:147px;width:208px;height:28px;border:1px solid #3d3e42;background:#292a2e;border-radius:2px;font-size:12px;line-height:26px;color:#dcdcdc;padding-left:7px">静态数据</div>
<svg class="abs" style="left:1812px;top:154px" width="18" height="14"><path d="M4.1 3.4L9 9.5L13.9 3.4" stroke="#55565a" stroke-width="1.2" fill="none"/></svg>
<div class="abs" style="left:1540px;top:188px;width:294px;height:20px;background:#1e1e1e"></div>
<div class="abs" style="left:1540px;top:206px;width:294px;height:251px;background:#1e1e1e;overflow:hidden;font-family:'DejaVu Sans Mono','Liberation Mono','Noto Sans CJK SC',monospace;font-size:12px;line-height:18px">
<div class="abs" style="left:0;top:1px;width:36px;text-align:right;color:#c6c6c6">1</div>
<div class="abs" style="left:0;top:19px;width:36px;text-align:right;color:#858585">2</div>
<div class="abs" style="left:0;top:37px;width:36px;text-align:right;color:#858585">3</div>
<div class="abs" style="left:0;top:55px;width:36px;text-align:right;color:#858585">4</div>
<div class="abs" style="left:0;top:73px;width:36px;text-align:right;color:#858585">5</div>
<div class="abs" style="left:0;top:91px;width:36px;text-align:right;color:#858585">6</div>
<div class="abs" style="left:0;top:109px;width:36px;text-align:right;color:#858585">7</div>
<div class="abs" style="left:0;top:127px;width:36px;text-align:right;color:#858585">8</div>
<div class="abs" style="left:0;top:145px;width:36px;text-align:right;color:#858585">9</div>
<div class="abs" style="left:0;top:163px;width:36px;text-align:right;color:#858585">10</div>
<div class="abs" style="left:0;top:181px;width:36px;text-align:right;color:#858585">11</div>
<div class="abs" style="left:0;top:199px;width:36px;text-align:right;color:#858585">12</div>
<div class="abs" style="left:0;top:217px;width:36px;text-align:right;color:#858585">13</div>
<div class="abs" style="left:0;top:235px;width:36px;text-align:right;color:#858585">14</div>
<div class="abs" style="left:62px;top:0;width:184px;height:251px;overflow:hidden">
<div class="abs" style="left:0;top:1px;width:184px;height:18px;border:1.5px solid #2b2b2b"></div>
<div class="abs" style="left:0.4px;top:1px;width:7.2px;height:18px;border:1px solid #888;background:rgba(0,100,0,.18)"></div>
<div class="abs" style="left:0.4px;top:19px;width:1px;height:232px;background:#404040"></div>
<div class="abs" style="left:14.6px;top:37px;width:1px;height:55px;background:#404040"></div>
<div class="abs" style="left:14.6px;top:127px;width:1px;height:55px;background:#404040"></div>
<div class="abs" style="left:14.6px;top:217px;width:1px;height:40px;background:#404040"></div>
<div class="abs" style="left:-0.2px;top:1px;white-space:pre;-webkit-text-stroke:.2px"><span style="color:#d4d4d4">[</span></div>
<div class="abs" style="left:-0.2px;top:19px;white-space:pre;-webkit-text-stroke:.2px">  <span style="color:#d4d4d4">{</span></div>
<div class="abs" style="left:-0.2px;top:37px;white-space:pre;-webkit-text-stroke:.2px">    <span style="color:#9cdcfe">"xField"</span><span style="color:#d4d4d4">: </span><span style="color:#ce9178">"东北"</span><span style="color:#d4d4d4">,</span></div>
<div class="abs" style="left:-0.2px;top:55px;white-space:pre;-webkit-text-stroke:.2px">    <span style="color:#9cdcfe">"cateField"</span><span style="color:#d4d4d4">: </span><span style="color:#ce9178">"办公用品"</span><span style="color:#d4d4d4">,</span></div>
<div class="abs" style="left:-0.2px;top:73px;white-space:pre;-webkit-text-stroke:.2px">    <span style="color:#9cdcfe">"yField"</span><span style="color:#d4d4d4">: </span><span style="color:#b5cea8">3669</span></div>
<div class="abs" style="left:-0.2px;top:91px;white-space:pre;-webkit-text-stroke:.2px">  <span style="color:#d4d4d4">},</span></div>
<div class="abs" style="left:-0.2px;top:109px;white-space:pre;-webkit-text-stroke:.2px">  <span style="color:#d4d4d4">{</span></div>
<div class="abs" style="left:-0.2px;top:127px;white-space:pre;-webkit-text-stroke:.2px">    <span style="color:#9cdcfe">"xField"</span><span style="color:#d4d4d4">: </span><span style="color:#ce9178">"东北"</span><span style="color:#d4d4d4">,</span></div>
<div class="abs" style="left:-0.2px;top:145px;white-space:pre;-webkit-text-stroke:.2px">    <span style="color:#9cdcfe">"cateField"</span><span style="color:#d4d4d4">: </span><span style="color:#ce9178">"家具"</span><span style="color:#d4d4d4">,</span></div>
<div class="abs" style="left:-0.2px;top:163px;white-space:pre;-webkit-text-stroke:.2px">    <span style="color:#9cdcfe">"yField"</span><span style="color:#d4d4d4">: </span><span style="color:#b5cea8">1479</span></div>
<div class="abs" style="left:-0.2px;top:181px;white-space:pre;-webkit-text-stroke:.2px">  <span style="color:#d4d4d4">},</span></div>
<div class="abs" style="left:-0.2px;top:199px;white-space:pre;-webkit-text-stroke:.2px">  <span style="color:#d4d4d4">{</span></div>
<div class="abs" style="left:-0.2px;top:217px;white-space:pre;-webkit-text-stroke:.2px">    <span style="color:#9cdcfe">"xField"</span><span style="color:#d4d4d4">: </span><span style="color:#ce9178">"东北"</span><span style="color:#d4d4d4">,</span></div>
<div class="abs" style="left:-0.2px;top:235px;white-space:pre;-webkit-text-stroke:.2px">    <span style="color:#9cdcfe">"cateField"</span><span style="color:#d4d4d4">: </span><span style="color:#ce9178">"技术"</span><span style="color:#d4d4d4">,</span></div>
</div>
<div class="abs" style="left:240px;top:0;width:6px;height:251px;background:linear-gradient(90deg,rgba(0,0,0,0),rgba(0,0,0,.45))"></div>
<svg class="abs" style="left:246px;top:0" width="48" height="251"><rect x="0" y="0" width="48" height="251" fill="#1e1e1e"/><path d="M12.1 5.4h8.4v1.3h-8.4zM12.1 7.4h10.8v1.3h-10.8zM12.1 9.4h8.4v1.3h-8.4zM12.1 15.4h8.4v1.3h-8.4zM12.1 17.4h10.8v1.3h-10.8zM12.1 19.4h8.4v1.3h-8.4zM12.1 25.4h8.4v1.3h-8.4zM12.1 27.4h10.8v1.3h-10.8zM12.1 29.4h8.4v1.3h-8.4zM12.1 35.4h8.4v1.3h-8.4zM12.1 37.4h10.8v1.3h-10.8zM12.1 39.4h8.4v1.3h-8.4zM12.1 45.4h8.4v1.3h-8.4zM12.1 47.4h10.8v1.3h-10.8zM12.1 49.4h8.4v1.3h-8.4zM12.1 55.4h8.4v1.3h-8.4zM12.1 57.4h10.8v1.3h-10.8zM12.1 59.4h8.4v1.3h-8.4zM12.1 65.4h8.4v1.3h-8.4zM12.1 67.4h10.8v1.3h-10.8zM12.1 69.4h8.4v1.3h-8.4zM12.1 75.4h8.4v1.3h-8.4zM12.1 77.4h10.8v1.3h-10.8zM12.1 79.4h8.4v1.3h-8.4zM12.1 85.4h8.4v1.3h-8.4zM12.1 87.4h10.8v1.3h-10.8zM12.1 89.4h8.4v1.3h-8.4zM12.1 95.4h8.4v1.3h-8.4zM12.1 97.4h10.8v1.3h-10.8zM12.1 99.4h8.4v1.3h-8.4zM12.1 105.4h8.4v1.3h-8.4zM12.1 107.4h10.8v1.3h-10.8zM12.1 109.4h8.4v1.3h-8.4zM12.1 115.4h8.4v1.3h-8.4zM12.1 117.4h10.8v1.3h-10.8zM12.1 119.4h8.4v1.3h-8.4zM12.1 125.4h8.4v1.3h-8.4zM12.1 127.4h10.8v1.3h-10.8zM12.1 129.4h8.4v1.3h-8.4zM12.1 135.4h8.4v1.3h-8.4zM12.1 137.4h10.8v1.3h-10.8zM12.1 139.4h8.4v1.3h-8.4zM12.1 145.4h8.4v1.3h-8.4zM12.1 147.4h10.8v1.3h-10.8zM12.1 149.4h8.4v1.3h-8.4zM12.1 155.4h8.4v1.3h-8.4zM12.1 157.4h10.8v1.3h-10.8zM12.1 159.4h8.4v1.3h-8.4zM12.1 165.4h8.4v1.3h-8.4zM12.1 167.4h10.8v1.3h-10.8zM12.1 169.4h8.4v1.3h-8.4zM12.1 175.4h8.4v1.3h-8.4zM12.1 177.4h10.8v1.3h-10.8zM12.1 179.4h8.4v1.3h-8.4z" fill="#56809a"/><path d="M22.1 5.4h6.2v1.3h-6.2zM24.1 7.4h10.2v1.3h-10.2zM22.1 15.4h6.2v1.3h-6.2zM24.1 17.4h7.4v1.3h-7.4zM22.1 25.4h6.2v1.3h-6.2zM24.1 27.4h7.4v1.3h-7.4zM22.1 35.4h6.2v1.3h-6.2zM24.1 37.4h10.2v1.3h-10.2zM22.1 45.4h6.2v1.3h-6.2zM24.1 47.4h7.4v1.3h-7.4zM22.1 55.4h6.2v1.3h-6.2zM24.1 57.4h7.4v1.3h-7.4zM22.1 65.4h6.2v1.3h-6.2zM24.1 67.4h10.2v1.3h-10.2zM22.1 75.4h6.2v1.3h-6.2zM24.1 77.4h7.4v1.3h-7.4zM22.1 85.4h6.2v1.3h-6.2zM24.1 87.4h7.4v1.3h-7.4zM22.1 95.4h6.2v1.3h-6.2zM24.1 97.4h10.2v1.3h-10.2zM22.1 105.4h6.2v1.3h-6.2zM24.1 107.4h7.4v1.3h-7.4zM22.1 115.4h6.2v1.3h-6.2zM24.1 117.4h7.4v1.3h-7.4zM22.1 125.4h6.2v1.3h-6.2zM24.1 127.4h10.2v1.3h-10.2zM22.1 135.4h6.2v1.3h-6.2zM24.1 137.4h7.4v1.3h-7.4zM22.1 145.4h6.2v1.3h-6.2zM24.1 147.4h7.4v1.3h-7.4zM22.1 155.4h6.2v1.3h-6.2zM24.1 157.4h10.2v1.3h-10.2zM22.1 165.4h6.2v1.3h-6.2zM24.1 167.4h7.4v1.3h-7.4zM22.1 175.4h6.2v1.3h-6.2zM24.1 177.4h7.4v1.3h-7.4z" fill="#93634f"/><path d="M22.1 9.4h4v1.3h-4zM22.1 19.4h4v1.3h-4zM22.1 29.4h4v1.3h-4zM22.1 39.4h4v1.3h-4zM22.1 49.4h4v1.3h-4zM22.1 59.4h4v1.3h-4zM22.1 69.4h4v1.3h-4zM22.1 79.4h4v1.3h-4zM22.1 89.4h4v1.3h-4zM22.1 99.4h4v1.3h-4zM22.1 109.4h4v1.3h-4zM22.1 119.4h4v1.3h-4zM22.1 129.4h4v1.3h-4zM22.1 139.4h4v1.3h-4zM22.1 149.4h4v1.3h-4zM22.1 159.4h4v1.3h-4zM22.1 169.4h4v1.3h-4zM22.1 179.4h4v1.3h-4z" fill="#7f9375"/><path d="M8.3 1h1v2h-1zM10.3 3h1v2h-1zM10.3 11h1.6v2h-1.6zM10.3 13h1v2h-1zM10.3 21h1.6v2h-1.6zM10.3 23h1v2h-1zM10.3 31h1.6v2h-1.6zM10.3 33h1v2h-1zM10.3 41h1.6v2h-1.6zM10.3 43h1v2h-1zM10.3 51h1.6v2h-1.6zM10.3 53h1v2h-1zM10.3 61h1.6v2h-1.6zM10.3 63h1v2h-1zM10.3 71h1.6v2h-1.6zM10.3 73h1v2h-1zM10.3 81h1.6v2h-1.6zM10.3 83h1v2h-1zM10.3 91h1.6v2h-1.6zM10.3 93h1v2h-1zM10.3 101h1.6v2h-1.6zM10.3 103h1v2h-1zM10.3 111h1.6v2h-1.6zM10.3 113h1v2h-1zM10.3 121h1.6v2h-1.6zM10.3 123h1v2h-1zM10.3 131h1.6v2h-1.6zM10.3 133h1v2h-1zM10.3 141h1.6v2h-1.6zM10.3 143h1v2h-1zM10.3 151h1.6v2h-1.6zM10.3 153h1v2h-1zM10.3 161h1.6v2h-1.6zM10.3 163h1v2h-1zM10.3 171h1.6v2h-1.6zM10.3 173h1v2h-1zM10.3 181h1.6v2h-1.6zM8.3 183h1v2h-1z" fill="#5e5e5e"/><rect x="34.3" y="0" width="13.7" height="251" fill="#1e1e1e"/><rect x="34.3" y="0" width="1" height="251" fill="#424242"/><rect x="35.5" y="1" width="12.5" height="1" fill="#2e2e2e"/><rect x="35.1" y="1" width="6.1" height="6.1" fill="#bdbdbd"/><rect x="35.1" y="244" width="6.1" height="6" fill="#bdbdbd"/></svg>
</div>
<div class="abs" style="left:1540px;top:457px;width:294px;height:44px;background:#303134"></div>
<div class="abs" style="left:1738px;top:464px;width:80px;height:28px;border:1px solid #3070ff;border-radius:2px;color:#3a79ff;font-size:14px;line-height:27.6px;text-align:center">窗口编辑</div>
<div class="abs" style="left:1540px;top:521px;font-size:14px;line-height:22px;color:#e4e4e4;white-space:nowrap">自定义数据处理</div>
<div class="abs" style="left:1804px;top:525px;width:30px;height:14px;border-radius:7px;background:#4b4c50"><div class="abs" style="left:2px;top:2px;width:10px;height:10px;border-radius:5px;background:#fff"></div></div>
<svg class="abs" style="left:1539px;top:549px" width="14" height="14"><circle cx="7" cy="7" r="5.4" stroke="#838383" stroke-width="1" fill="none"/><path d="M7 4.1V8" stroke="#838383" stroke-width="1.2"/><circle cx="7" cy="9.7" r=".75" fill="#838383"/></svg>
<div class="abs" style="left:1555.5px;top:548px;font-size:12px;line-height:18px;color:#8a8a8a;white-space:nowrap">输入#应用交互参数</div>
<svg class="abs" style="left:1546px;top:581px" width="16" height="16"><circle cx="6.9" cy="6.7" r="3.7" stroke="#3070ff" stroke-width="1.15" fill="none"/><path d="M9.6 9.4L13.3 12.2" stroke="#3070ff" stroke-width="1.25"/></svg>
<div class="abs" style="left:1571.4px;top:579.5px;font-size:12px;line-height:18px;color:#3a79ff;white-space:nowrap">预览数据处理结果</div>
<div class="abs" style="left:1540px;top:924px;width:293px;height:28px;border-radius:2px;background:#3070ff"></div>
<div class="abs" style="left:1650px;top:927px;font-size:14px;line-height:22px;font-weight:500;color:#fff;white-space:nowrap">维度分析</div>
<svg class="abs" style="left:1709px;top:930px" width="16" height="16"><circle cx="8" cy="8" r="6.1" stroke="#fff" stroke-width="1.2" fill="none"/><path d="M6.7 5.2L9.6 8L6.7 10.8" stroke="#fff" stroke-width="1.2" fill="none"/></svg>
<svg class="abs" style="left:0;top:0" width="1850" height="998"><path d="M1446.9 538.5L1506.3 427.7L1566.7 317.4L1563.4 315.6Q1558.4 312.7 1563.2 309.6L1584.9 295.6Q1590.5 291.9 1590.3 298.7L1589.2 324.4Q1589.0 330.2 1584.0 327.3L1580.7 325.4L1516.6 433.5L1451.5 541.1Z" fill="#f54a45"/><path d="M1477.4 607.3L1601.6 555.2L1726.2 504.1L1724.8 500.5Q1722.7 495.2 1728.3 495.7L1755.1 498.1Q1762.1 498.7 1757.4 503.9L1739.3 523.8Q1735.5 528.0 1733.5 522.7L1732.1 519.1L1605.9 566.2L1479.3 612.2Z" fill="#f54a45"/></svg>
</div></body></html>
